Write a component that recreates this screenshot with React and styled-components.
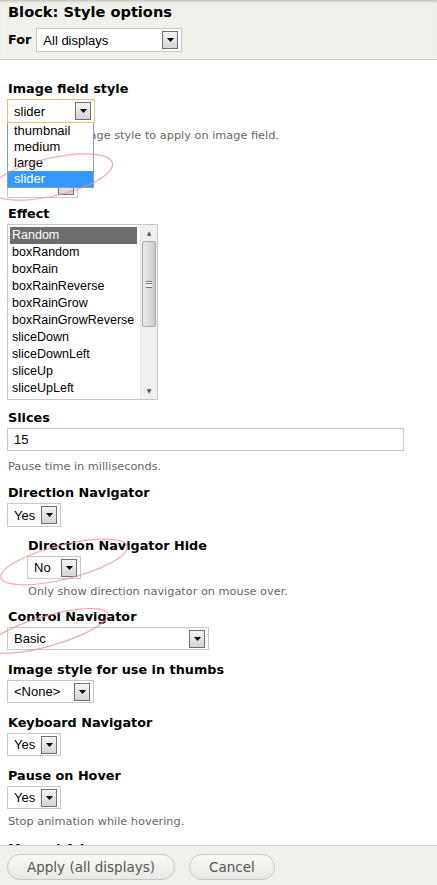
import styled, { createGlobalStyle } from "styled-components";

const GlobalStyle = createGlobalStyle`
  body {
    margin: 0;
    background: #ffffff;
    font-family: "DejaVu Sans", Verdana, sans-serif;
  }
`;

// 리스트 박스 항목
const effects = [
  "Random",
  "boxRandom",
  "boxRain",
  "boxRainReverse",
  "boxRainGrow",
  "boxRainGrowReverse",
  "sliceDown",
  "sliceDownLeft",
  "sliceUp",
  "sliceUpLeft",
];

const imageStyles = ["thumbnail", "medium", "large", "slider"];

function Select({ value, width, focused, h }) {
  return (
    <SelectBox width={width} focused={focused} h={h}>
      <SelectValue>{value}</SelectValue>
      <ArrowButton>
        <svg width="7" height="4" viewBox="0 0 7 4">
          <path d="M0 0h7L3.5 4z" fill="#000" />
        </svg>
      </ArrowButton>
    </SelectBox>
  );
}

export default function App() {
  return (
    <>
      <GlobalStyle />
      <Page>
        <Header>
          <Title>Block: Style options</Title>
          <ForRow>
            <Label inline>For</Label>
            <Select value="All displays" width={146} />
          </ForRow>
        </Header>

        <Content>
          <Item mt={21}>
            <Label>Image field style</Label>
            <DropWrap>
              <Select value="slider" width={88} focused />
              <DropList>
                {imageStyles.map((item) => (
                  <DropOption key={item} active={item === "slider"}>
                    {item}
                  </DropOption>
                ))}
              </DropList>
            </DropWrap>
            <Description mt={6}>Choose the image style to apply on image field.</Description>
          </Item>

          {/* 드롭다운 아래에 가려진 필드 */}
          <Item mt={13}>
            <Label>Theme</Label>
            <Select value="" width={71} />
          </Item>

          <Item mt={8}>
            <Label>Effect</Label>
            <ListBox>
              <ListItems>
                {effects.map((item, i) => (
                  <ListItem key={item} active={i === 0}>
                    {item}
                  </ListItem>
                ))}
              </ListItems>
              <ScrollBar>
                <ScrollArrow>▲</ScrollArrow>
                <ScrollThumb>
                  <Grip />
                </ScrollThumb>
                <ScrollTrack />
                <ScrollArrow>▼</ScrollArrow>
              </ScrollBar>
            </ListBox>
          </Item>

          <Item mt={10}>
            <Label>Slices</Label>
            <TextInput>15</TextInput>
            <Description mt={9}>Pause time in milliseconds.</Description>
          </Item>

          <Item mt={11}>
            <Label>Direction Navigator</Label>
            <Select value="Yes" width={54} />
          </Item>

          <Item mt={11} indent={20}>
            <Label>Direction Navigator Hide</Label>
            <Select value="No" width={54} h={23} />
            <Description mt={6}>Only show direction navigator on mouse over.</Description>
          </Item>

          <Item mt={10}>
            <Label>Control Navigator</Label>
            <Select value="Basic" width={202} h={23} />
          </Item>

          <Item mt={12}>
            <Label>Image style for use in thumbs</Label>
            <Select value="<None>" width={87} h={23} />
          </Item>

          <Item mt={12}>
            <Label>Keyboard Navigator</Label>
            <Select value="Yes" width={54} h={23} />
          </Item>

          <Item mt={12}>
            <Label>Pause on Hover</Label>
            <Select value="Yes" width={54} h={23} />
            <Description mt={6}>Stop animation while hovering.</Description>
          </Item>

          <Item mt={12}>
            <Label>Manual Advance</Label>
          </Item>
        </Content>

        <Footer>
          <PillButton>Apply (all displays)</PillButton>
          <PillButton>Cancel</PillButton>
        </Footer>

        {/* 손으로 그린 빨간 타원 표시 */}
        <Marks width="437" height="885" viewBox="0 0 437 885">
          <ellipse cx="52" cy="177" rx="62" ry="19" transform="rotate(-13 52 177)" />
          <ellipse cx="64" cy="562" rx="65" ry="17" transform="rotate(-14 64 562)" />
          <ellipse cx="48" cy="631" rx="62" ry="15" transform="rotate(-16 48 631)" />
        </Marks>
      </Page>
    </>
  );
}

const Page = styled.div`
  position: relative;
  width: 437px;
  height: 885px;
  display: flex;
  flex-direction: column;
  overflow: hidden;
  background: #fff;
`;

const Header = styled.div`
  flex: none;
  height: 60px;
  box-sizing: border-box;
  padding: 2px 8px 0;
  background: #f1f1ec;
  border-bottom: 1px solid #cfcfca;
  box-shadow: inset 0 3px 3px -2px rgba(0, 0, 0, 0.25);
`;

const Title = styled.h1`
  margin: 0;
  font-size: 14.6px;
  line-height: 20px;
  font-weight: 700;
  color: #000;
`;

const ForRow = styled.div`
  display: flex;
  align-items: center;
  gap: 5px;
  margin-top: 6px;
`;

const Content = styled.div`
  flex: 1;
  min-height: 0;
  overflow: hidden;
  padding-left: 7px;
`;

const Item = styled.div`
  margin-top: ${(p) => p.mt || 0}px;
  padding-left: ${(p) => p.indent || 0}px;
`;

const Label = styled.div`
  font-size: 12.8px;
  line-height: 16px;
  font-weight: 700;
  color: #000;
  margin: ${(p) => (p.inline ? "0" : "0 0 2px 1px")};
`;

const Description = styled.div`
  margin-top: ${(p) => p.mt || 7}px;
  padding-left: 1px;
  font-size: 11.3px;
  line-height: 14px;
  color: #666;
`;

const SelectBox = styled.div`
  box-sizing: border-box;
  width: ${(p) => p.width}px;
  height: ${(p) => p.h || 24}px;
  display: flex;
  align-items: center;
  justify-content: space-between;
  padding: 0 3px 0 6px;
  background: #fff;
  border: 1px solid ${(p) => (p.focused ? "#e5c27a" : "#c8c8c8")};
  font-family: "Liberation Sans", Arial, sans-serif;
  font-size: 13px;
  color: #000;
`;

const SelectValue = styled.span`
  white-space: nowrap;
`;

const ArrowButton = styled.span`
  box-sizing: border-box;
  width: 16px;
  height: 18px;
  display: flex;
  align-items: center;
  justify-content: center;
  border: 1px solid #707070;
  background: linear-gradient(#f4f4f4, #d4d4d4);
`;

const DropWrap = styled.div`
  position: relative;
  width: 88px;
`;

const DropList = styled.div`
  position: absolute;
  top: 24px;
  left: 0;
  z-index: 2;
  box-sizing: border-box;
  width: 87px;
  background: #fff;
  border: 1px solid #7f9db9;
  border-top: none;
  font-family: "Liberation Sans", Arial, sans-serif;
  font-size: 13px;
`;

const DropOption = styled.div`
  height: 16px;
  line-height: 16px;
  padding-left: 6px;
  color: ${(p) => (p.active ? "#fff" : "#000")};
  background: ${(p) => (p.active ? "#3399ff" : "transparent")};
`;

const ListBox = styled.div`
  box-sizing: border-box;
  width: 151px;
  height: 176px;
  display: flex;
  border: 1px solid #c8c8c8;
  background: #fff;
`;

const ListItems = styled.div`
  flex: 1;
  padding: 2px 0 0 2px;
  overflow: hidden;
  font-family: "Liberation Sans", Arial, sans-serif;
  font-size: 12.5px;
`;

const ListItem = styled.div`
  height: 17px;
  line-height: 17px;
  padding-left: 2px;
  white-space: nowrap;
  color: ${(p) => (p.active ? "#fff" : "#000")};
  background: ${(p) => (p.active ? "#6d6d6d" : "transparent")};
  width: ${(p) => (p.active ? "125px" : "auto")};
`;

const ScrollBar = styled.div`
  flex: none;
  width: 16px;
  display: flex;
  flex-direction: column;
  background: #f0f0f0;
  border-left: 1px solid #e6e6e6;
`;

const ScrollArrow = styled.div`
  height: 16px;
  font-size: 6px;
  line-height: 16px;
  text-align: center;
  color: #555;
`;

const ScrollThumb = styled.div`
  height: 84px;
  margin: 0 1px;
  display: flex;
  align-items: center;
  justify-content: center;
  border: 1px solid #a9a9a9;
  border-radius: 2px;
  background: linear-gradient(90deg, #e9e9e9, #d8d8d8 60%, #c8c8c8);
`;

const Grip = styled.div`
  width: 6px;
  height: 5px;
  border-top: 1px solid #777;
  border-bottom: 1px solid #777;
  background: linear-gradient(#f0f0f0 1px, #777 1px, #777 2px, #f0f0f0 2px);
`;

const ScrollTrack = styled.div`
  flex: 1;
`;

const TextInput = styled.div`
  box-sizing: border-box;
  width: 397px;
  height: 23px;
  padding-left: 6px;
  border: 1px solid #c8c8c8;
  font-family: "Liberation Sans", Arial, sans-serif;
  font-size: 13px;
  line-height: 21px;
  color: #000;
`;

const Footer = styled.div`
  flex: none;
  height: 40px;
  box-sizing: border-box;
  display: flex;
  align-items: center;
  gap: 14px;
  padding: 3px 7px 0;
  background: #f1f1ec;
  border-top: 1px solid #cfcfca;
`;

const PillButton = styled.button`
  height: 26px;
  padding: 0 19px;
  border: 1px solid #c8c8c4;
  border-radius: 13px;
  background: linear-gradient(#f9f9f7, #e8e8e4);
  font-family: "DejaVu Sans", Verdana, sans-serif;
  font-size: 13.5px;
  color: #555;
`;

const Marks = styled.svg`
  position: absolute;
  top: 0;
  left: 0;
  z-index: 3;
  pointer-events: none;

  ellipse {
    fill: none;
    stroke: #ec8c95;
    stroke-width: 1.2;
    opacity: 0.75;
  }
`;
